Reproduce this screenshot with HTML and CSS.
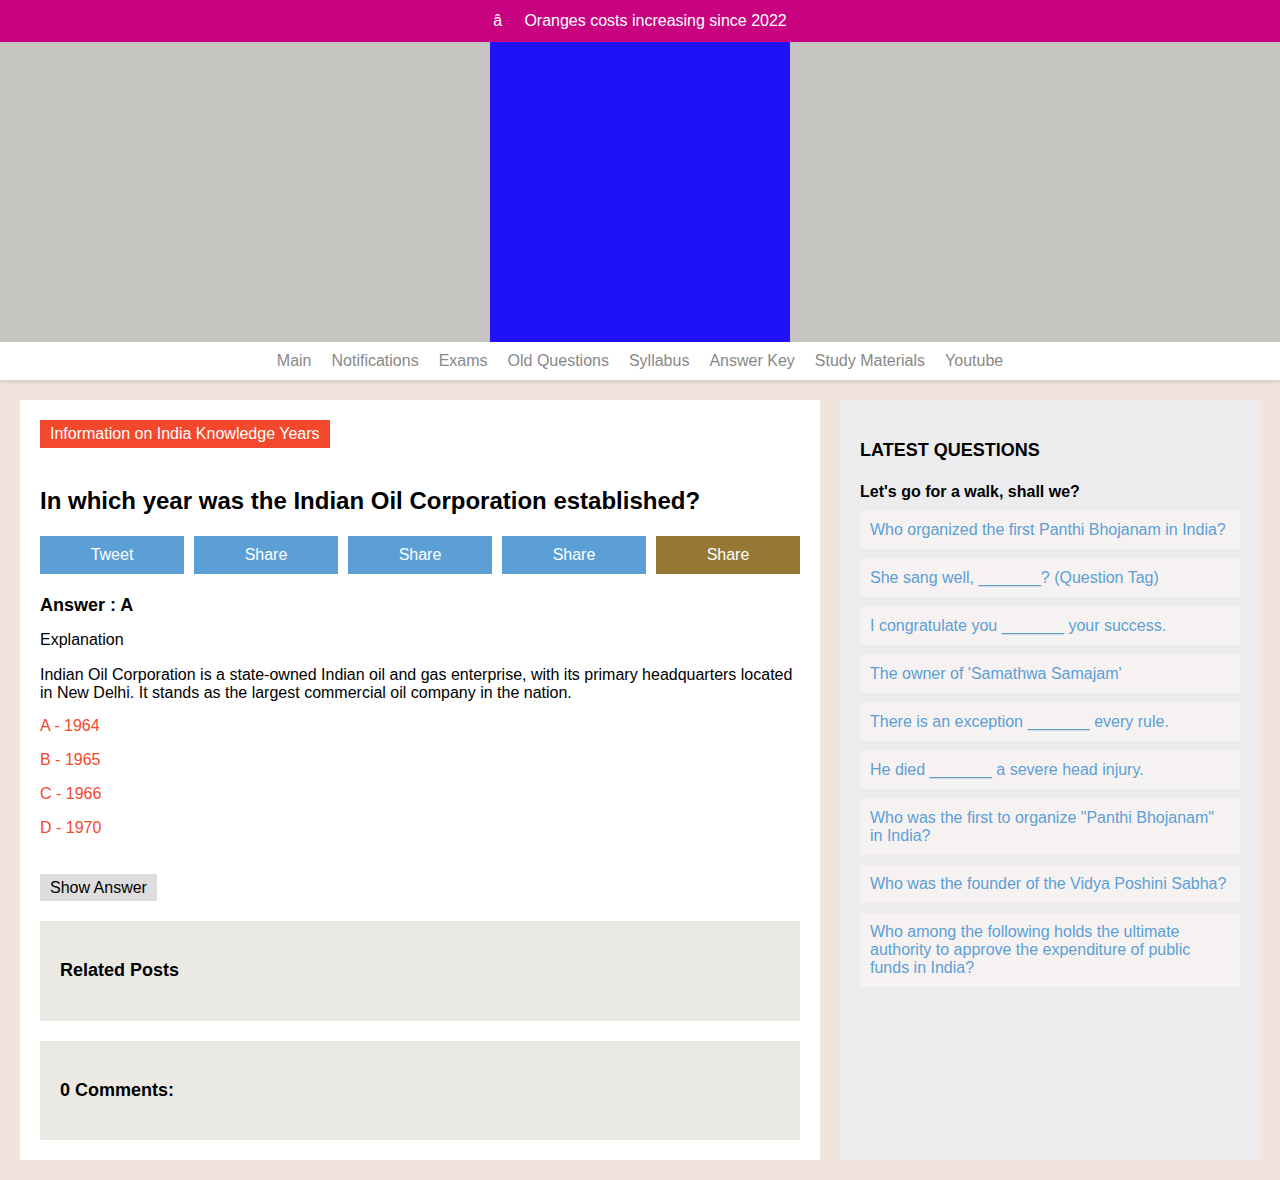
FILE: index.html
```html
<!DOCTYPE html>
<html lang="en">
<head>
<meta charset="utf-8">
<title>Indian Oil Corporation</title>
<link rel="stylesheet" href="styles.css">
</head>
<body>
<div class="topbar">â&nbsp;&nbsp;&nbsp;&nbsp; Oranges costs increasing since 2022</div>
<div class="banner"><div class="banner-img"></div></div>
<nav class="nav">
  <a href="#">Main</a>
  <a href="#">Notifications</a>
  <a href="#">Exams</a>
  <a href="#">Old Questions</a>
  <a href="#">Syllabus</a>
  <a href="#">Answer Key</a>
  <a href="#">Study Materials</a>
  <a href="#">Youtube</a>
</nav>
<div class="main">
  <article class="post">
    <span class="label">Information on India Knowledge Years</span>
    <h1 class="title">In which year was the Indian Oil Corporation established?</h1>
    <div class="shares">
      <a class="share" href="#">Tweet</a>
      <a class="share" href="#">Share</a>
      <a class="share" href="#">Share</a>
      <a class="share" href="#">Share</a>
      <a class="share gold" href="#">Share</a>
    </div>
    <h3 class="answer">Answer : A</h3>
    <p class="expl">Explanation</p>
    <p class="desc">Indian Oil Corporation is a state-owned Indian oil and gas enterprise, with its primary headquarters located in New Delhi. It stands as the largest commercial oil company in the nation.</p>
    <p class="opt">A - 1964</p>
    <p class="opt">B - 1965</p>
    <p class="opt">C - 1966</p>
    <p class="opt">D - 1970</p>
    <button class="show">Show Answer</button>
    <div class="box"><h3>Related Posts</h3></div>
    <div class="box"><h3>0 Comments:</h3></div>
  </article>
  <aside class="side">
    <h3 class="side-title">LATEST QUESTIONS</h3>
    <h4 class="side-sub">Let's go for a walk, shall we?</h4>
    <ul class="qlist">
      <li><a href="#">Who organized the first Panthi Bhojanam in India?</a></li>
      <li><a href="#">She sang well, _______? (Question Tag)</a></li>
      <li><a href="#">I congratulate you _______ your success.</a></li>
      <li><a href="#">The owner of 'Samathwa Samajam'</a></li>
      <li><a href="#">There is an exception _______ every rule.</a></li>
      <li><a href="#">He died _______ a severe head injury.</a></li>
      <li><a href="#">Who was the first to organize "Panthi Bhojanam" in India?</a></li>
      <li><a href="#">Who was the founder of the Vidya Poshini Sabha?</a></li>
      <li><a href="#">Who among the following holds the ultimate authority to approve the expenditure of public funds in India?</a></li>
    </ul>
  </aside>
</div>
</body>
</html>
```

FILE: styles.css
```css
* { box-sizing: border-box; }
html, body { margin: 0; padding: 0; }
body {
  font-family: "Liberation Sans", Arial, sans-serif;
  font-size: 16px;
  background: #f0e4dc;
  color: #000;
}
a { text-decoration: none; }

.topbar {
  background: #c9037f;
  color: #fff;
  height: 42px;
  line-height: 42px;
  text-align: center;
  font-size: 16px;
}

.banner {
  background: #c5c4c0;
  height: 300px;
  display: flex;
  justify-content: center;
}
.banner-img {
  width: 300px;
  height: 300px;
  background: #1f12f9;
}

.nav {
  background: #fff;
  height: 38px;
  display: flex;
  justify-content: center;
  align-items: center;
  gap: 20px;
  box-shadow: 0 2px 4px rgba(0,0,0,0.12);
  position: relative;
}
.nav a { color: #888888; font-size: 16px; }

.main {
  display: flex;
  gap: 20px;
  padding: 20px;
}

.post {
  width: 800px;
  background: #fff;
  padding: 20px;
}
.label {
  display: inline-block;
  background: #f4482d;
  color: #fff;
  height: 28px;
  line-height: 28px;
  padding: 0 10px;
}
.title {
  font-size: 24px;
  line-height: 28px;
  font-weight: bold;
  margin: 39px 0 21px;
}
.shares {
  display: flex;
  gap: 10px;
}
.share {
  flex: 1;
  height: 38px;
  line-height: 38px;
  text-align: center;
  color: #fff;
  background: #5b9fd6;
}
.share.gold { background: #967734; }
.answer {
  font-size: 18px;
  line-height: 21px;
  margin: 21px 0 15px;
}
.post p {
  margin: 16px 0;
  line-height: 18px;
}
.post p.expl { margin: 0 0 17px; }
.post p.desc { margin: 0 0 15px; }
.post p.opt { color: #f4482d; margin: 0 0 16px; }
.show {
  display: block;
  margin-top: 37px;
  font-family: inherit;
  font-size: 16px;
  line-height: 19px;
  padding: 4px 10px;
  background: #dddddd;
  border: 0;
  color: #000;
}
.box {
  background: #eae9e4;
  padding: 20px;
  margin-top: 20px;
}
.box h3 {
  margin: 19px 0;
  font-size: 18px;
  line-height: 21.5px;
}

.side {
  width: 420px;
  background: #ececee;
  padding: 20px;
}
.side-title {
  font-size: 18px;
  line-height: 21px;
  margin: 20px 0 0;
}
.side-sub {
  font-size: 16px;
  line-height: 18px;
  margin: 22px 0 10px;
}
.qlist {
  list-style: none;
  margin: 0;
  padding: 0;
  display: flex;
  flex-direction: column;
  gap: 10px;
}
.qlist li {
  background: #f6f2f1;
  padding: 10px;
  line-height: 18px;
}
.qlist a { color: #5b9fd6; }
```
